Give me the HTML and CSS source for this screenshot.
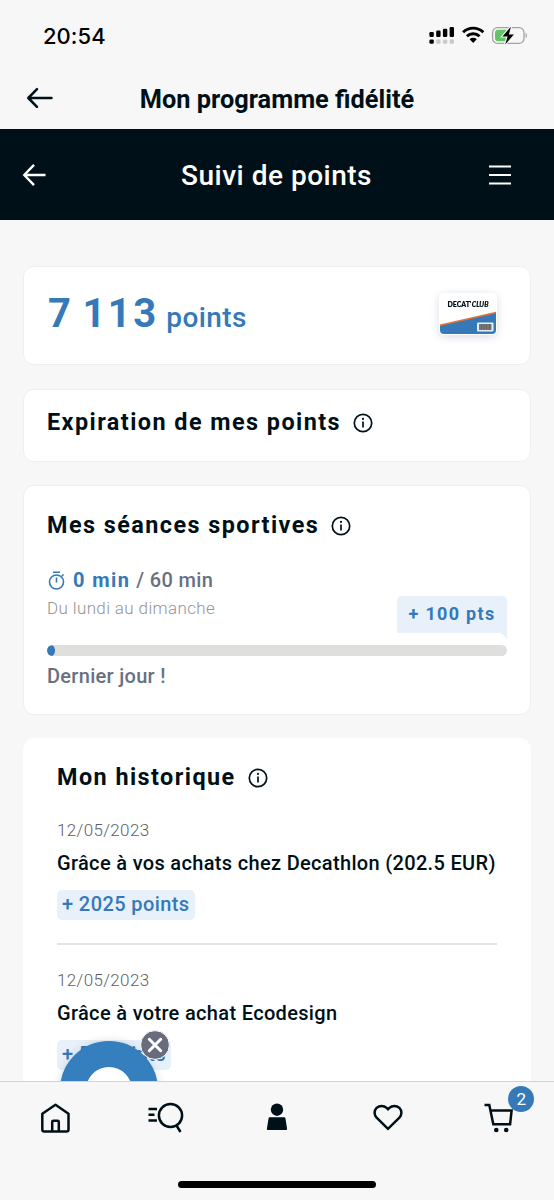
FILE: index.html
```html
<!DOCTYPE html>
<html lang="fr">
<head>
<meta charset="utf-8">
<title>Mon programme fidélité</title>
<link rel="stylesheet" href="styles.css">
</head>
<body>
<svg class="defs" width="0" height="0">
  <symbol id="info" viewBox="0 0 20 20">
    <circle cx="10" cy="10" r="8.7" fill="none" stroke="currentColor" stroke-width="1.7"/>
    <circle cx="10" cy="5.9" r="1.05" fill="currentColor"/>
    <path d="M10 8.6V14.4" stroke="currentColor" stroke-width="1.7"/>
  </symbol>
</svg>

<div class="status">
  <span class="clock">20:54</span>
  <svg class="status-icons" width="100" height="20" viewBox="0 0 100 20">
    <g>
      <rect x="0.4" y="6" width="4.4" height="5" rx="1.2"/>
      <rect x="7.2" y="4.5" width="4.4" height="6.5" rx="1.2"/>
      <rect x="13.9" y="2.7" width="4.4" height="8.3" rx="1.2"/>
      <rect x="20.6" y="1" width="4.4" height="10" rx="1.2"/>
      <rect x="0.4" y="13.4" width="4.4" height="4.4" rx="1.4"/>
      <g fill="#c9c9cb">
        <rect x="7.2" y="13.4" width="4.4" height="4.4" rx="1.4"/>
        <rect x="13.9" y="13.4" width="4.4" height="4.4" rx="1.4"/>
        <rect x="20.6" y="13.4" width="4.4" height="4.4" rx="1.4"/>
      </g>
    </g>
    <g fill="none" stroke="#000" stroke-width="2.9">
      <path d="M34.1 6.3a14.3 14.3 0 0 1 20.2 0"/>
      <path d="M37.9 10.3a8.9 8.9 0 0 1 12.6 0"/>
    </g>
    <path d="M40.6 13.2a5.2 5.2 0 0 1 7.2 0L44.2 17z"/>
    <rect x="63.600" y="1.7" width="31.4" height="15.6" rx="4.8" fill="none" stroke="#a3a3a5" stroke-width="1.3"/>
    <path d="M96.600 6.8c1.8.7 1.8 4.7 0 5.4z" fill="#a3a3a5"/>
    <path d="M69 3.7h8.500v11.6H69a3 3 0 0 1-3-3v-5.600a3 3 0 0 1 3-3z" fill="#65c466"/>
    <path d="M81.900.8L73.400 10.400h5.200l-2.400 8 8.700-9.900h-5z" stroke="#f7f7f7" stroke-width="2.200" paint-order="stroke"/>
  </svg>
</div>

<header class="app-bar">
  <svg width="28" height="22" viewBox="0 0 28 22" fill="none" stroke="#001018" stroke-width="2.500" stroke-linecap="round" stroke-linejoin="round"><path d="M25.500 11H2.500M11 2.200L2.300 11l8.700 8.800"/></svg>
  <h1>Mon programme fidélité</h1>
</header>

<div class="page-bar">
  <svg width="24" height="24" viewBox="0 0 24 24" fill="none" stroke="#fff" stroke-width="2.400"><path d="M23.500 12H2M12 1.800L2.300 12 12 22.200"/></svg>
  <h2>Suivi de points</h2>
  <svg width="22" height="22" viewBox="0 0 22 22" stroke="#fff" stroke-width="2"><path d="M0 2.500h22M0 11h22M0 19.500h22"/></svg>
</div>

<main>
  <section class="card balance">
    <p><strong>7 113</strong><span>points</span></p>
    <svg class="club" width="58" height="42" viewBox="0 0 58 42">
      <rect width="58" height="42" rx="5" fill="#fff"/>
      <path d="M1 32.500L57 19.500V37a4 4 0 0 1-4 4H5a4 4 0 0 1-4-4z" fill="#3579b9"/>
      <path d="M1 32.200L57 19.500" stroke="#e5702f" stroke-width="1.600"/>
      <text x="8.500" y="14" class="logo" textLength="41" lengthAdjust="spacingAndGlyphs">DECAT'<tspan class="slant" dx=".6">CLUB</tspan></text>
      <rect x="38" y="29.500" width="16.500" height="9" rx="1" fill="#e8eef2"/>
      <rect x="40" y="31" width="12.500" height="6" fill="#77777b"/>
      <path d="M42.500 31v6M45 31v6M47.500 31v6M50.500 31v6" stroke="#5d5d63" stroke-width=".8"/>
    </svg>
  </section>

  <section class="card expiry">
    <h3>Expiration de mes points</h3><svg class="info"><use href="#info"/></svg>
  </section>

  <section class="card sessions">
    <div class="title"><h3>Mes séances sportives</h3><svg class="info"><use href="#info"/></svg></div>
    <div class="goal">
      <div>
        <p class="minutes">
          <svg width="17" height="19" viewBox="0 0 17 19" fill="none" stroke="#3579b9" stroke-width="1.600"><circle cx="8.500" cy="11" r="7"/><path d="M5 1.200h7M8.500 6.500v5M13.800 5.200l1.700-1.700"/></svg>
          <strong>0 min</strong><span>/ 60 min</span>
        </p>
        <p class="period">Du lundi au dimanche</p>
      </div>
      <div class="reward">+ 100 pts</div>
    </div>
    <div class="track"><div class="fill"></div></div>
    <p class="last-day">Dernier jour !</p>
  </section>

  <section class="card history">
    <div class="title"><h3>Mon historique</h3><svg class="info"><use href="#info"/></svg></div>
    <article class="first">
      <time>12/05/2023</time>
      <p class="label">Grâce à vos achats chez Decathlon (202.5 EUR)</p>
      <span class="chip">+ 2025 points</span>
    </article>
    <article>
      <time>12/05/2023</time>
      <p class="label">Grâce à votre achat Ecodesign</p>
      <span class="chip">+ 50 points</span>
    </article>
  </section>

  <div class="bubble"></div>
  <svg class="dismiss" width="30" height="30" viewBox="0 0 30 30"><circle cx="15" cy="15" r="14.400" fill="#686c7c" stroke="#fff" stroke-width="1"/><path d="M9.300 9.300l11.400 11.400M20.700 9.300L9.300 20.700" stroke="#fff" stroke-width="3" stroke-linecap="round"/></svg>
</main>

<nav>
  <a><svg width="36" height="36" viewBox="0 0 36 36" fill="none" stroke="#001018" stroke-width="2.500" stroke-linejoin="round"><path d="M5.300 13.700L18.500 4.800l13 8.900v15.700a2 2 0 0 1-2 2H7.300a2 2 0 0 1-2-2zM15.200 31v-9a1.200 1.200 0 0 1 1.200-1.200h4.200a1.200 1.200 0 0 1 1.200 1.200v9"/></svg></a>
  <a><svg width="36" height="36" viewBox="0 0 36 36" fill="none" stroke="#001018" stroke-width="2.500"><circle cx="22.500" cy="15.500" r="11.600"/><path d="M28.500 25.500l4 6.500M.5 9H9M.5 14.700H6.500M.5 20.500H9"/></svg></a>
  <a><svg width="36" height="36" viewBox="0 0 36 36" fill="#001018"><circle cx="18" cy="9.700" r="6.200"/><path d="M10.700 17.300h14.600q.9 0 1.100.9l1.700 10.500q.2 1.400-1.100 1.400H9q-1.300 0-1.100-1.400l1.700-10.500q.2-.9 1.100-.9z"/></svg></a>
  <a><svg width="36" height="36" viewBox="0 0 36 36" fill="none" stroke="#001018" stroke-width="2.500"><path d="M18 28.800L6.600 17.700a7 7 0 0 1 0-9.800 7.200 7.200 0 0 1 10 0L18 9.200l1.400-1.300a7.200 7.200 0 0 1 10 0 7 7 0 0 1 0 9.800z"/></svg></a>
  <a class="cart"><svg width="36" height="36" viewBox="0 0 36 36" fill="none" stroke="#001018" stroke-width="2.500"><path d="M3.500 4.900h4.800L12.300 24.200h16.800l1.500-13.600H9.500"/><g fill="#001018" stroke="none"><circle cx="15.300" cy="30" r="2.300"/><circle cx="25.200" cy="30" r="2.300"/></g></svg><span class="count">2</span></a>
</nav>
<div class="home-area"><div class="home-bar"></div></div>
</body>
</html>
```
FILE: styles.css
```css
* { box-sizing: border-box; margin: 0; padding: 0; }
body {
  width: 554px; height: 1200px; overflow: hidden;
  display: flex; flex-direction: column;
  background: #f7f7f7; color: #001018;
  font-family: Roboto, sans-serif;
}
svg { display: block; flex: none; }
.defs { position: absolute; }

.status {
  height: 69px; padding: 2px 25px 0 43px;
  display: flex; align-items: center; justify-content: space-between;
}
.clock { font: 500 22px/28px Inter, sans-serif; letter-spacing: .05px; color: #000; }
.status-icons { margin-top: 1px; }

.app-bar { height: 60px; padding: 0 26px; display: flex; align-items: center; }
.app-bar svg { margin-top: -2px; }
.app-bar h1 {
  flex: 1; margin-right: 28px; text-align: center;
  font-size: 25.350px; font-weight: 700; line-height: 30px;
}

.page-bar {
  height: 91px; padding: 0 43px 0 22px; background: #001018; color: #fff;
  display: flex; align-items: center; flex: none;
}
.page-bar h2 {
  flex: 1; text-align: center; font-size: 28px; font-weight: 500;
  line-height: 32px; letter-spacing: .5px; padding: 2px 0 0 18px;
}

main {
  flex: 1; min-height: 0; overflow: hidden; position: relative;
  padding: 46px 23px 0; display: flex; flex-direction: column; gap: 24px;
}
.card {
  flex: none; background: #fff; border: 1px solid #eeeff2; border-radius: 11px;
}
h3 { font-size: 23.4px; font-weight: 700; line-height: 28px; letter-spacing: 1.450px; margin-top: -2px; }
.info { width: 20px; height: 20px; margin: 0 0 1px 12px; }
.title { display: flex; align-items: center; height: 28px; }

.balance {
  height: 99px; padding: 0 33px 0 24px;
  display: flex; align-items: center; justify-content: space-between;
}
.balance p { color: #3579b9; display: flex; align-items: baseline; gap: 7.500px; margin-top: -4px; }
.balance strong { font-size: 40px; line-height: 48px; letter-spacing: 2.500px; word-spacing: -3.500px; }
.balance span { font-size: 28px; font-weight: 500; letter-spacing: .4px; }
.club { filter: drop-shadow(0 2px 4px rgba(20, 40, 80, .16)); margin-top: -4px; }
.logo { font: 900 8px Lato, sans-serif; fill: #001018; stroke: #001018; stroke-width: .2px; }
.slant { font-style: italic; }

.expiry { height: 73px; padding: 0 23px 5px; display: flex; align-items: center; }

.sessions { height: 230px; padding: 26px 23px 0 23px; margin-top: -1px; }
.goal { display: flex; justify-content: space-between; height: 92px; }
.minutes { display: flex; align-items: center; height: 24px; margin-top: 28px; }
.minutes svg { margin: 1px 0 0 1px; }
.minutes strong { font-size: 20px; color: #3579b9; letter-spacing: 1.400px; margin-left: 8px; }
.minutes span { font-size: 20px; font-weight: 500; color: #687080; letter-spacing: .35px; margin-left: 6px; }
.period { font-size: 17px; font-weight: 300; line-height: 24px; letter-spacing: .37px; color: #949499; margin-top: 4px; }
.reward {
  width: 110px; height: 46px; margin-top: 56px; border-radius: 5px 5px 0 0;
  background: radial-gradient(ellipse 9px 9px at 101px 46px, #fff 98%, transparent) no-repeat, linear-gradient(#fff, #fff) 0 37px / 101px 9px no-repeat, #e8f1f9;
  color: #3579b9; font-size: 18px; font-weight: 700; line-height: 36px;
  text-align: center; letter-spacing: 1.300px;
}
.track { height: 11px; margin-top: 13px; border-radius: 6px; overflow: hidden; background: #dfdfdd; position: relative; z-index: 1; }
.fill { width: 8px; height: 11px; border-radius: 50%; background: #3579b9; }
.last-day { font-size: 20px; font-weight: 500; line-height: 24px; letter-spacing: .3px; color: #687080; margin-top: 8px; }

.history { height: 500px; padding: 25px 33px 0; border-color: #fff; margin-top: -1px; }
article { height: 149px; padding-top: 23px; }
.first { height: 153px; padding-top: 26px; border-bottom: 2px solid #e2e4e8; }
article time { display: block; font-size: 17px; font-weight: 300; line-height: 24px; letter-spacing: .35px; color: #5c5f66; }
.label { font-size: 20px; font-weight: 500; line-height: 26px; letter-spacing: .33px; margin-top: 8px; white-space: nowrap; }
.chip {
  display: inline-block; height: 30px; padding: 0 5px; margin-top: 14px;
  border-radius: 5px; background: #e8f1f9; color: #3579b9;
  font-size: 20px; font-weight: 500; line-height: 29px; letter-spacing: .4px;
}

.bubble {
  position: absolute; left: 60px; top: 821px; width: 98px; height: 98px;
  border: 26px solid #357fbf; border-radius: 50%; background: #fff;
  box-shadow: 0 0 10px rgba(0, 30, 60, .14);
}
.dismiss { position: absolute; left: 140px; top: 810px; }

nav {
  height: 80px; flex: none; border-top: 1px solid #d2d2d4; padding-top: 18px;
  display: grid; grid-template-columns: repeat(5, 1fr);
}
nav a { display: flex; justify-content: center; height: 36px; position: relative; }
.count {
  position: absolute; left: 65px; top: -14px; width: 26px; height: 26px;
  border-radius: 50%; background: #3579b9; color: #fff;
  font-size: 17px; line-height: 26px; text-align: center;
}
.home-area { height: 39px; flex: none; display: flex; justify-content: center; padding-top: 20px; }
.home-bar { width: 198px; height: 7px; border-radius: 4px; background: #000; }
```
